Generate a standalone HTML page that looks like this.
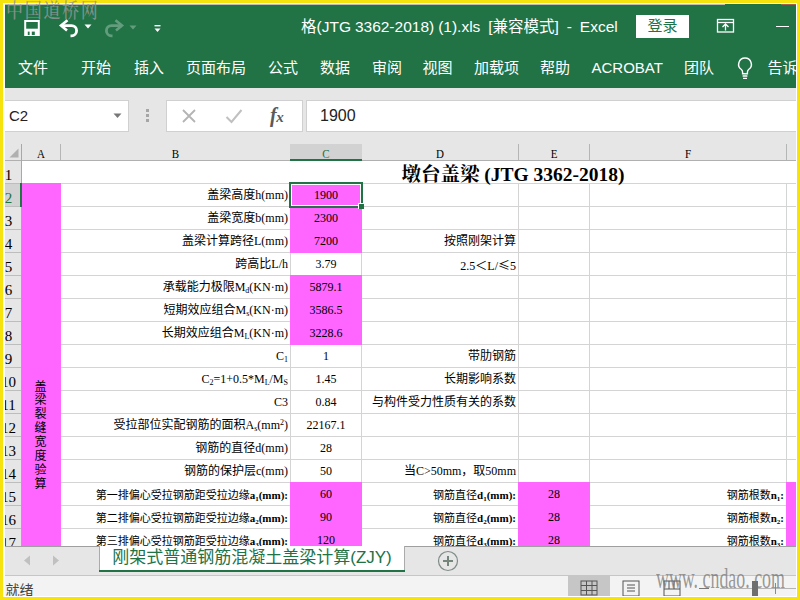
<!DOCTYPE html>
<html lang="zh-CN"><head><meta charset="utf-8"><title>Excel</title>
<style>
html,body{margin:0;padding:0}
body{width:800px;height:600px;overflow:hidden;background:#f6e30d;position:relative;
 font-family:"Liberation Sans","Noto Sans CJK SC",sans-serif;}
.abs,.abs *{box-sizing:border-box}
#frame{position:absolute;left:3px;top:3px;width:794px;height:594px;background:#fff;overflow:hidden}
#win{position:absolute;left:2px;top:1px;width:791px;height:592px;background:#e6e6e6;overflow:hidden}
/* coordinates inside #win are page coords minus (5,4) ; we use a shifted inner wrapper */
#pg{position:absolute;left:-5px;top:-4px;width:800px;height:600px}
#pg div,#pg span,#pg svg{position:absolute}
#pg .t span,#pg .c span, #pg .c sub, #pg .c sup,#pg .c b{position:static}
.green{background:#217346}
.rt{color:#fff;font-size:15px;line-height:20px;top:58px;white-space:nowrap}
.c{font-family:"Liberation Serif","Noto Sans CJK SC",sans-serif;font-weight:400;font-size:12px;line-height:23px;height:23px;white-space:nowrap;color:#000;overflow:visible}
.c.r{text-align:right}
.c.m{text-align:center}
.c.s{font-family:"Liberation Serif","Noto Sans CJK SC",sans-serif;font-size:11px;font-weight:400;margin-top:.5px}
.c.s b{font-weight:700}
.c sub{font-size:8px;vertical-align:-2px;line-height:0}
.c sup{font-size:8px;vertical-align:4px;line-height:0}
.c.s sub{font-size:7px}
.cj{font-family:"Noto Sans CJK SC",sans-serif}
.hl{background:#d4d4d4;height:1px}
.vl{background:#d4d4d4;width:1px}
.ch{font-family:"Liberation Serif","Noto Serif CJK SC",serif;font-size:12.5px;line-height:15px;top:146.5px;height:15px;transform:scaleX(.88);text-align:center;color:#000}
.rh{font-family:"Liberation Serif","Noto Serif CJK SC",serif;font-size:15px;line-height:23px;height:23px;left:0;width:17px;text-align:center;color:#000;letter-spacing:0}
</style></head><body>
<div id="frame" class="abs"><div id="win"><div id="pg">

<div class="green" style="left:5px;top:4px;width:791px;height:84px"></div>
<div style="left:5px;top:4px;width:720px;height:1px;background:#bcbcbc"></div>
<div style="left:781px;top:4px;width:15px;height:1px;background:#a0605a"></div>
<svg style="left:22px;top:18px" width="20" height="20" viewBox="22 18 20 20"><rect x="25.200" y="21" width="13.600" height="14" fill="none" stroke="#fff" stroke-width="2"/><rect x="25" y="28.700" width="14" height="7.300" fill="#fff"/><rect x="27.800" y="31.600" width="1.800" height="3.400" fill="#217346"/><rect x="31.800" y="31.600" width="3" height="3.400" fill="#217346"/></svg>
<svg style="left:56px;top:16px" width="26" height="24" viewBox="56 16 26 24"><path d="M62 25.600H71.500a5.100 5.100 0 0 1 0 10.200H70.500" fill="none" stroke="#fff" stroke-width="2.800"/><path d="M67.500 20.300L61 25.600l6 5" fill="none" stroke="#fff" stroke-width="2.600"/></svg>
<svg style="left:84px;top:24px" width="8" height="5" viewBox="0 0 8 5"><path d="M0.500 0.500h7l-3.500 4z" fill="#fff"/></svg>
<svg style="left:100px;top:16px" width="26" height="24" viewBox="100 16 26 24"><g opacity=".3"><path d="M121 25.600H111.500a5.100 5.100 0 0 0 0 10.200H112.500" fill="none" stroke="#fff" stroke-width="2.800"/><path d="M115.500 20.300L122 25.600l-6 5" fill="none" stroke="#fff" stroke-width="2.600"/></g></svg>
<svg style="left:129px;top:24.500px" width="8" height="5" viewBox="0 0 8 5"><path d="M0.500 0.500h7l-3.500 4z" fill="#fff" opacity=".3"/></svg>
<svg style="left:153px;top:23.500px" width="9" height="9" viewBox="0 0 9 9"><rect x="1.500" y="1" width="6" height="1.400" fill="#fff"/><path d="M1.500 4.500h6l-3 3.500z" fill="#fff"/></svg>
<div class="t" style="left:301px;top:16px;color:#fff;font-size:15.5px;line-height:22px;white-space:pre;word-spacing:-0.35px">格(JTG 3362-2018) (1).xls  [兼容模式]  -  Excel</div>
<div style="left:636px;top:15px;width:53px;height:23px;background:#fff;color:#217346;font-size:15px;line-height:22px;text-align:center">登录</div>
<svg style="left:716px;top:18px" width="19" height="16" viewBox="0 0 19 16"><rect x="1.500" y="1.500" width="16" height="12.500" fill="none" stroke="#fff" stroke-width="1.300"/><path d="M1.500 4.500h16" stroke="#fff" stroke-width="1.300"/><path d="M9.500 12.500v-6M6.500 9l3-3 3 3" fill="none" stroke="#fff" stroke-width="1.300"/></svg>
<div style="left:776px;top:26px;width:13px;height:1px;background:#fff"></div>
<div class="t rt" style="left:18px">文件</div>
<div class="t rt" style="left:81px">开始</div>
<div class="t rt" style="left:134px">插入</div>
<div class="t rt" style="left:186px">页面布局</div>
<div class="t rt" style="left:268px">公式</div>
<div class="t rt" style="left:320px">数据</div>
<div class="t rt" style="left:372px">审阅</div>
<div class="t rt" style="left:422.5px">视图</div>
<div class="t rt" style="left:474px">加载项</div>
<div class="t rt" style="left:540px">帮助</div>
<div class="t rt" style="left:591.5px">ACROBAT</div>
<div class="t rt" style="left:684px">团队</div>
<div class="t rt" style="left:767.5px">告诉</div>
<svg style="left:736px;top:56px" width="18" height="25" viewBox="0 0 18 25"><path d="M9 2a6.300 6.300 0 0 0-3.600 11.500c.8.700 1.200 1.800 1.200 3v1.200h4.800v-1.200c0-1.200.4-2.300 1.200-3A6.300 6.300 0 0 0 9 2z" fill="none" stroke="#fff" stroke-width="1.400"/><path d="M6.600 20h4.800M7 22.300h4" stroke="#fff" stroke-width="1.300"/></svg>
<div style="left:5px;top:100px;width:124px;height:32px;background:#fff;border:1px solid #d0d0d0;border-left:none"></div>
<div class="t" style="left:9px;top:106px;font-size:15px;line-height:20px;color:#222">C2</div>
<svg style="left:113px;top:113px" width="9" height="6" viewBox="0 0 9 6"><path d="M0.500 0.500h8l-4 4.500z" fill="#777"/></svg>
<div style="left:146px;top:109px;width:3px;height:3px;background:#a6a6a6"></div>
<div style="left:146px;top:114px;width:3px;height:3px;background:#a6a6a6"></div>
<div style="left:146px;top:119px;width:3px;height:3px;background:#a6a6a6"></div>
<div style="left:166px;top:100px;width:137px;height:32px;background:#fff;border:1px solid #d0d0d0"></div>
<svg style="left:181px;top:108px" width="16" height="16" viewBox="0 0 16 16"><path d="M2 2l12 12M14 2L2 14" stroke="#b4b4b4" stroke-width="1.800"/></svg>
<svg style="left:225px;top:108px" width="18" height="16" viewBox="0 0 18 16"><path d="M1.500 9l5 5 10-12" fill="none" stroke="#c0c0c0" stroke-width="2"/></svg>
<div class="t" style="left:270px;top:103px;font-family:'Liberation Serif',serif;font-style:italic;font-weight:bold;font-size:20px;line-height:24px;color:#5a5a5a;letter-spacing:-0.5px"><span>f</span><span style="font-size:15px">x</span></div>
<div style="left:306px;top:100px;width:492px;height:32px;background:#fff;border:1px solid #d0d0d0"></div>
<div class="t" style="left:320px;top:106px;font-size:16px;line-height:20px;color:#222">1900</div>
<div style="left:5px;top:145px;width:792px;height:401px;background:#fff"></div>
<div style="left:5px;top:145px;width:792px;height:15px;background:#e6e6e6"></div>
<div style="left:5px;top:160px;width:17px;height:386px;background:#e6e6e6"></div>
<svg style="left:8px;top:147px" width="12" height="12" viewBox="0 0 12 12"><path d="M10.500 1.500v9h-9z" fill="#b0b0b0"/></svg>
<div class="hl" style="left:22px;top:183px;width:775px"></div>
<div style="left:5px;top:183px;width:16px;height:1px;background:#bdbdbd"></div>
<div class="hl" style="left:22px;top:206px;width:775px"></div>
<div style="left:5px;top:206px;width:16px;height:1px;background:#bdbdbd"></div>
<div class="hl" style="left:22px;top:229px;width:775px"></div>
<div style="left:5px;top:229px;width:16px;height:1px;background:#bdbdbd"></div>
<div class="hl" style="left:22px;top:252px;width:775px"></div>
<div style="left:5px;top:252px;width:16px;height:1px;background:#bdbdbd"></div>
<div class="hl" style="left:22px;top:275px;width:775px"></div>
<div style="left:5px;top:275px;width:16px;height:1px;background:#bdbdbd"></div>
<div class="hl" style="left:22px;top:298px;width:775px"></div>
<div style="left:5px;top:298px;width:16px;height:1px;background:#bdbdbd"></div>
<div class="hl" style="left:22px;top:321px;width:775px"></div>
<div style="left:5px;top:321px;width:16px;height:1px;background:#bdbdbd"></div>
<div class="hl" style="left:22px;top:344px;width:775px"></div>
<div style="left:5px;top:344px;width:16px;height:1px;background:#bdbdbd"></div>
<div class="hl" style="left:22px;top:367px;width:775px"></div>
<div style="left:5px;top:367px;width:16px;height:1px;background:#bdbdbd"></div>
<div class="hl" style="left:22px;top:390px;width:775px"></div>
<div style="left:5px;top:390px;width:16px;height:1px;background:#bdbdbd"></div>
<div class="hl" style="left:22px;top:413px;width:775px"></div>
<div style="left:5px;top:413px;width:16px;height:1px;background:#bdbdbd"></div>
<div class="hl" style="left:22px;top:436px;width:775px"></div>
<div style="left:5px;top:436px;width:16px;height:1px;background:#bdbdbd"></div>
<div class="hl" style="left:22px;top:459px;width:775px"></div>
<div style="left:5px;top:459px;width:16px;height:1px;background:#bdbdbd"></div>
<div class="hl" style="left:22px;top:482px;width:775px"></div>
<div style="left:5px;top:482px;width:16px;height:1px;background:#bdbdbd"></div>
<div class="hl" style="left:22px;top:505px;width:775px"></div>
<div style="left:5px;top:505px;width:16px;height:1px;background:#bdbdbd"></div>
<div class="hl" style="left:22px;top:528px;width:775px"></div>
<div style="left:5px;top:528px;width:16px;height:1px;background:#bdbdbd"></div>
<div class="vl" style="left:60px;top:183px;height:363px"></div>
<div style="left:60px;top:144px;width:1px;height:16px;background:#b5b5b5"></div>
<div class="vl" style="left:290px;top:183px;height:363px"></div>
<div style="left:290px;top:144px;width:1px;height:16px;background:#b5b5b5"></div>
<div class="vl" style="left:361px;top:183px;height:363px"></div>
<div style="left:361px;top:144px;width:1px;height:16px;background:#b5b5b5"></div>
<div class="vl" style="left:518px;top:183px;height:363px"></div>
<div style="left:518px;top:144px;width:1px;height:16px;background:#b5b5b5"></div>
<div class="vl" style="left:589px;top:183px;height:363px"></div>
<div style="left:589px;top:144px;width:1px;height:16px;background:#b5b5b5"></div>
<div class="vl" style="left:786px;top:183px;height:363px"></div>
<div style="left:786px;top:144px;width:1px;height:16px;background:#b5b5b5"></div>
<div style="left:5px;top:160px;width:792px;height:1px;background:#b0b0b0"></div>
<div style="left:21px;top:144px;width:1px;height:402px;background:#a8a8a8"></div>
<div style="left:290px;top:144px;width:72px;height:15px;background:#d2d2d2"></div>
<div style="left:290px;top:159px;width:72px;height:2px;background:#217346"></div>
<div style="left:5px;top:184px;width:15px;height:22px;background:#d2d2d2"></div>
<div style="left:20px;top:183px;width:2px;height:24px;background:#217346"></div>
<div style="left:22px;top:183px;width:39px;height:364px;background:#ff66ff"></div>
<div style="left:290px;top:183px;width:72px;height:70px;background:#ff66ff"></div>
<div style="left:290px;top:275px;width:72px;height:70px;background:#ff66ff"></div>
<div style="left:290px;top:482px;width:72px;height:65px;background:#ff66ff"></div>
<div style="left:518px;top:482px;width:72px;height:65px;background:#ff66ff"></div>
<div style="left:786px;top:482px;width:11px;height:65px;background:#ff66ff"></div>
<div class="t ch" style="left:22px;width:38px;color:#000">A</div>
<div class="t ch" style="left:61px;width:229px;color:#000">B</div>
<div class="t ch" style="left:291px;width:70px;color:#217346">C</div>
<div class="t ch" style="left:362px;width:156px;color:#000">D</div>
<div class="t ch" style="left:519px;width:70px;color:#000">E</div>
<div class="t ch" style="left:590px;width:196px;color:#000">F</div>
<div class="t rh" style="top:164px;color:#000">1</div>
<div class="t rh" style="top:187px;color:#217346">2</div>
<div class="t rh" style="top:210px;color:#000">3</div>
<div class="t rh" style="top:233px;color:#000">4</div>
<div class="t rh" style="top:256px;color:#000">5</div>
<div class="t rh" style="top:279px;color:#000">6</div>
<div class="t rh" style="top:302px;color:#000">7</div>
<div class="t rh" style="top:325px;color:#000">8</div>
<div class="t rh" style="top:348px;color:#000">9</div>
<div class="t rh" style="top:371px;color:#000">10</div>
<div class="t rh" style="top:394px;color:#000">11</div>
<div class="t rh" style="top:417px;color:#000">12</div>
<div class="t rh" style="top:440px;color:#000">13</div>
<div class="t rh" style="top:463px;color:#000">14</div>
<div class="t rh" style="top:486px;color:#000">15</div>
<div class="t rh" style="top:509px;color:#000">16</div>
<div class="t rh" style="top:532px;color:#000">17</div>
<div class="t" style="left:301px;top:163px;width:424px;text-align:center;font-family:'Liberation Serif','Noto Serif CJK SC',serif;font-weight:bold;font-size:19.5px;line-height:24px;white-space:nowrap;color:#000">墩台盖梁 (JTG 3362-2018)</div>
<div class="c r " style="left:61px;top:184px;width:227px">盖梁高度h(mm)</div>
<div class="c r " style="left:61px;top:207px;width:227px">盖梁宽度b(mm)</div>
<div class="c r " style="left:61px;top:230px;width:227px">盖梁计算跨径L(mm)</div>
<div class="c r " style="left:61px;top:253px;width:227px">跨高比L/h</div>
<div class="c r " style="left:61px;top:276px;width:227px">承载能力极限M<sub>d</sub>(KN·m)</div>
<div class="c r " style="left:61px;top:299px;width:227px">短期效应组合M<sub>s</sub>(KN·m)</div>
<div class="c r " style="left:61px;top:322px;width:227px">长期效应组合M<sub>L</sub>(KN·m)</div>
<div class="c r " style="left:61px;top:345px;width:227px">C<sub>1</sub></div>
<div class="c r " style="left:61px;top:368px;width:227px">C<sub>2</sub>=1+0.5*M<sub>L</sub>/M<sub>S</sub></div>
<div class="c r " style="left:61px;top:391px;width:227px">C3</div>
<div class="c r " style="left:61px;top:414px;width:227px">受拉部位实配钢筋的面积A<sub>s</sub>(mm<sup>2</sup>)</div>
<div class="c r " style="left:61px;top:437px;width:227px">钢筋的直径d(mm)</div>
<div class="c r " style="left:61px;top:460px;width:227px">钢筋的保护层c(mm)</div>
<div class="c r s" style="left:61px;top:483px;width:227px">第一排偏心受拉钢筋距受拉边缘<b>a<sub>1</sub>(mm):</b></div>
<div class="c r s" style="left:61px;top:506px;width:227px">第二排偏心受拉钢筋距受拉边缘<b>a<sub>2</sub>(mm):</b></div>
<div class="c r s" style="left:61px;top:529px;width:227px">第三排偏心受拉钢筋距受拉边缘<b>a<sub>3</sub>(mm):</b></div>
<div class="c m" style="left:291px;top:184px;width:70px">1900</div>
<div class="c m" style="left:291px;top:207px;width:70px">2300</div>
<div class="c m" style="left:291px;top:230px;width:70px">7200</div>
<div class="c m" style="left:291px;top:253px;width:70px">3.79</div>
<div class="c m" style="left:291px;top:276px;width:70px">5879.1</div>
<div class="c m" style="left:291px;top:299px;width:70px">3586.5</div>
<div class="c m" style="left:291px;top:322px;width:70px">3228.6</div>
<div class="c m" style="left:291px;top:345px;width:70px">1</div>
<div class="c m" style="left:291px;top:368px;width:70px">1.45</div>
<div class="c m" style="left:291px;top:391px;width:70px">0.84</div>
<div class="c m" style="left:291px;top:414px;width:70px">22167.1</div>
<div class="c m" style="left:291px;top:437px;width:70px">28</div>
<div class="c m" style="left:291px;top:460px;width:70px">50</div>
<div class="c m" style="left:291px;top:483px;width:70px">60</div>
<div class="c m" style="left:291px;top:506px;width:70px">90</div>
<div class="c m" style="left:291px;top:529px;width:70px">120</div>
<div class="c r " style="left:362px;top:230px;width:154px">按照刚架计算</div>
<div class="c r " style="left:362px;top:253px;width:154px">2.5<span class="cj">＜</span>L/<span class="cj" style="display:inline-block;width:12px;text-align:center">≤</span>5</div>
<div class="c r " style="left:362px;top:345px;width:154px">带肋钢筋</div>
<div class="c r " style="left:362px;top:368px;width:154px">长期影响系数</div>
<div class="c r " style="left:362px;top:391px;width:154px">与构件受力性质有关的系数</div>
<div class="c r " style="left:362px;top:460px;width:154px">当C&gt;50mm，取50mm</div>
<div class="c r s" style="left:362px;top:483px;width:154px">钢筋直径<b>d<sub>1</sub>(mm):</b></div>
<div class="c m" style="left:519px;top:483px;width:70px">28</div>
<div class="c r s" style="left:590px;top:483px;width:194px">钢筋根数<b>n<sub>1</sub>:</b></div>
<div class="c r s" style="left:362px;top:506px;width:154px">钢筋直径<b>d<sub>2</sub>(mm):</b></div>
<div class="c m" style="left:519px;top:506px;width:70px">28</div>
<div class="c r s" style="left:590px;top:506px;width:194px">钢筋根数<b>n<sub>2</sub>:</b></div>
<div class="c r s" style="left:362px;top:529px;width:154px">钢筋直径<b>d<sub>3</sub>(mm):</b></div>
<div class="c m" style="left:519px;top:529px;width:70px">28</div>
<div class="c r s" style="left:590px;top:529px;width:194px">钢筋根数<b>n<sub>3</sub>:</b></div>
<div class="t" style="left:21px;top:380.5px;width:39px;text-align:center;font-family:'Liberation Sans','Noto Sans CJK SC',sans-serif;font-size:12px;line-height:13.9px;color:#000">盖<br>梁<br>裂<br>缝<br>宽<br>度<br>验<br>算</div>
<div style="left:289px;top:182px;width:74px;height:26px;border:2px solid #217346;box-shadow:inset 0 0 0 1px #fff"></div>
<div style="left:358px;top:203px;width:6px;height:6px;background:#217346;border:1px solid #fff;border-right:none;border-bottom:none"></div>
<div style="left:5px;top:546px;width:792px;height:52px;background:#e6e6e6"></div>
<div style="left:5px;top:546px;width:792px;height:1px;background:#9f9f9f"></div>
<svg style="left:23px;top:555px" width="8" height="11" viewBox="0 0 8 11"><path d="M7 0.500v10l-6-5z" fill="#c0c0c0"/></svg>
<svg style="left:52px;top:555px" width="8" height="11" viewBox="0 0 8 11"><path d="M1 0.500v10l6-5z" fill="#c0c0c0"/></svg>
<div style="left:99px;top:546px;width:306px;height:25px;background:#fff;border-left:1px solid #ababab;border-right:1px solid #ababab"></div>
<div style="left:99px;top:570px;width:306px;height:2px;background:#217346"></div>
<div class="t" style="left:99px;top:546px;width:306px;text-align:center;font-size:17px;line-height:24px;color:#217346;white-space:nowrap">刚架式普通钢筋混凝土盖梁计算(ZJY)</div>
<svg style="left:437px;top:550px" width="22" height="22" viewBox="0 0 22 22"><circle cx="11" cy="11" r="9.500" fill="none" stroke="#7f8c85" stroke-width="1.200"/><path d="M6 11h10M11 6v10" stroke="#74867c" stroke-width="2"/></svg>
<div style="left:5px;top:575px;width:792px;height:23px;background:#f3f3f3"></div>
<div style="left:5px;top:575px;width:792px;height:1px;background:#c6c6c6"></div>
<div class="t" style="left:5.5px;top:580.5px;font-size:14px;line-height:18px;color:#444">就绪</div>
<div style="left:568px;top:576px;width:42px;height:22px;background:#c6c6c6"></div>
<svg style="left:580px;top:580px" width="18" height="16" viewBox="0 0 18 16"><rect x="1" y="1" width="16" height="14" fill="none" stroke="#555" stroke-width="1"/><path d="M1 5.500h16M1 10.500h16M6.500 1v14M12 1v14" stroke="#555" stroke-width="1"/></svg>
<svg style="left:622px;top:580px" width="18" height="17" viewBox="0 0 18 17"><rect x="1" y="1" width="16" height="15" fill="none" stroke="#555" stroke-width="1"/><path d="M5 5h8M5 8h8M5 11h8" stroke="#555" stroke-width="1.200"/></svg>
<svg style="left:663px;top:580px" width="18" height="17" viewBox="0 0 18 17"><rect x="1" y="1" width="16" height="15" fill="none" stroke="#555" stroke-width="1"/><path d="M1 9h16M6 1v8M11 1v8" stroke="#555" stroke-width="1"/></svg>
<div style="left:699px;top:588px;width:10px;height:1px;background:#777"></div>
<div style="left:720px;top:588px;width:78px;height:1px;background:#b5b5b5"></div>
<div style="left:752px;top:581px;width:6px;height:15px;background:#6e6e6e"></div>
<div style="left:775px;top:583px;width:1px;height:11px;background:#8a8a8a"></div>
<div class="t" style="left:656px;top:563px;font-family:'Liberation Serif',serif;font-size:30px;line-height:30px;color:rgba(110,110,110,.7);white-space:nowrap;transform:scaleX(.596);transform-origin:0 0">www. cndao. com</div>
</div></div></div>
<div style="position:absolute;left:6px;top:-2px;font-family:'Liberation Serif','Noto Serif CJK SC',serif;font-weight:500;font-size:17px;line-height:24px;color:rgba(150,150,150,.85);letter-spacing:1.7px;white-space:nowrap;transform:scaleY(1.2);transform-origin:0 0">中国道桥网</div>
</body></html>
